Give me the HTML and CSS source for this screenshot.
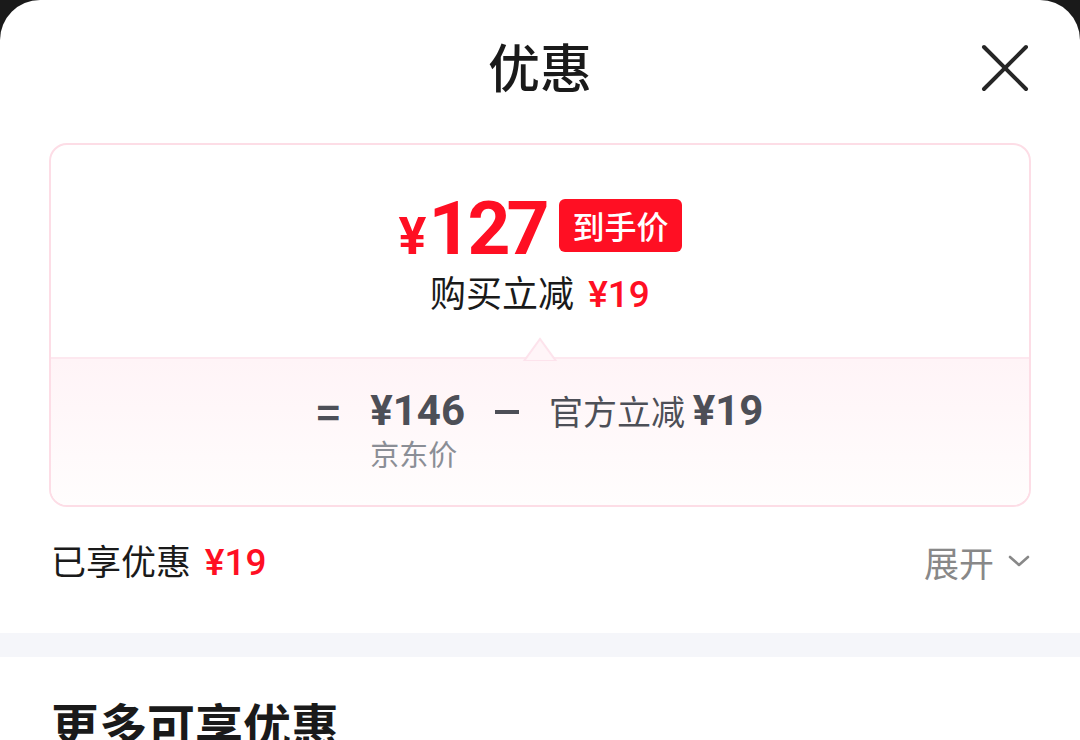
FILE: index.html
```html
<!DOCTYPE html>
<html lang="zh-CN">
<head>
  <meta charset="UTF-8">
  <meta name="viewport" content="width=device-width, initial-scale=1.0">
  <title>优惠</title>
  <link rel="stylesheet" href="styles.css">
</head>
<body>
  <div class="sheet">
    <header class="sheet-header">
      <h1>优惠</h1>
      <button class="close-button" aria-label="关闭">
        <svg width="48" height="48" viewBox="0 0 48 48" fill="none" stroke="currentColor" stroke-width="4" stroke-linecap="round">
          <path d="M3 3L45 45"></path>
          <path d="M45 3L3 45"></path>
        </svg>
      </button>
    </header>

    <section class="price-card">
      <div class="price-top">
        <div class="price-main">
          <span class="price-final"><span class="yen">¥</span>127</span>
          <span class="badge">到手价</span>
        </div>
        <div class="price-sub">购买立减 <span class="red num">¥19</span></div>
      </div>
      <div class="price-bottom">
        <svg class="notch" width="36" height="24" viewBox="0 0 36 24">
          <polygon points="2,24 18,2 34,24" fill="#fff5f8" stroke="#fde3ec" stroke-width="2"></polygon>
        </svg>
        <div class="formula">
          <span class="op">=</span>
          <div class="term">
            <span class="num strong">¥146</span>
            <span class="term-label">京东价</span>
          </div>
          <span class="op minus"></span>
          <div class="term">
            <span>官方立减 <span class="num strong">¥19</span></span>
          </div>
        </div>
      </div>
    </section>

    <div class="saved-row">
      <div class="saved">已享优惠 <span class="red num">¥19</span></div>
      <a href="#" class="expand">展开
        <svg width="22" height="14" viewBox="0 0 22 14" fill="none" stroke="currentColor" stroke-width="2.6" stroke-linecap="round" stroke-linejoin="round">
          <path d="M2 3L11 11L20 3"></path>
        </svg>
      </a>
    </div>

    <div class="band"></div>

    <h2 class="more-title">更多可享优惠</h2>
  </div>
</body>
</html>
```

FILE: styles.css
```css
* {
  margin: 0;
  padding: 0;
  box-sizing: border-box;
}

body {
  background-color: #1a1a1a;
  font-family: "Noto Sans CJK SC", "Noto Sans", sans-serif;
  color: #1a1a1a;
  overflow: hidden;
}

.sheet {
  background-color: #fff;
  border-radius: 40px 40px 0 0;
  height: 740px;
  overflow: hidden;
}

.sheet-header {
  height: 143px;
  display: flex;
  justify-content: center;
  align-items: center;
  position: relative;
}

.sheet-header h1 {
  font-size: 52px;
  font-weight: 500;
  margin-top: -12px;
}

.close-button {
  position: absolute;
  right: 51px;
  top: 44px;
  background: none;
  border: none;
  color: #262626;
  display: flex;
}

/* Carte du prix */
.price-card {
  margin: 0 49px;
  border: 2px solid #fddde6;
  border-radius: 18px;
  overflow: hidden;
}

.price-top {
  height: 212px;
  display: flex;
  flex-direction: column;
  align-items: center;
  padding-top: 45px;
}

.price-main {
  display: flex;
  align-items: center;
  gap: 14px;
  height: 76px;
}

.num {
  font-family: "Roboto", sans-serif;
}

.price-final {
  font-family: "Roboto", sans-serif;
  font-weight: 700;
  font-size: 75px;
  letter-spacing: -4px;
  color: #ff0f23;
  line-height: 1;
}

.price-final .yen {
  font-size: 52px;
  margin-right: 6px;
}

.badge {
  background-color: #ff0f23;
  color: #fff;
  font-size: 32px;
  font-weight: 500;
  line-height: 53px;
  padding: 0 13px;
  border-radius: 6px;
  margin-top: -6px;
}

.price-sub {
  font-size: 36px;
  line-height: 50px;
}

.red {
  color: #ff0f23;
}

.price-sub .num,
.saved .num {
  font-size: 37px;
  font-weight: 500;
  margin-left: 6px;
}

.price-bottom {
  position: relative;
  height: 148px;
  border-top: 2px solid #fde8ef;
  background: linear-gradient(#fff4f7, #fffdfd);
  display: flex;
  justify-content: center;
  padding-top: 27px;
}

.notch {
  position: absolute;
  left: 471px;
  top: -22px;
}

.formula {
  display: flex;
  align-items: flex-start;
  gap: 30px;
  color: #4d4f57;
  font-size: 34px;
  line-height: 50px;
}

.op {
  font-size: 40px;
  font-weight: 700;
}

.minus {
  width: 24px;
  height: 4px;
  background-color: #4d4f57;
  margin-top: 24px;
}

.term {
  display: flex;
  flex-direction: column;
}

.strong {
  font-weight: 700;
  font-size: 42px;
}

.term-label {
  font-size: 29px;
  color: #8b8e96;
  line-height: 34px;
}

/* Ligne des économies */
.saved-row {
  display: flex;
  justify-content: space-between;
  align-items: center;
  padding: 28px 50px 46px 51px;
  height: 126px;
}

.saved {
  font-size: 35px;
  line-height: 52px;
}

.expand {
  display: flex;
  align-items: center;
  gap: 14px;
  font-size: 35px;
  color: #888;
  text-decoration: none;
}

.band {
  height: 24px;
  background-color: #f5f6fa;
}

.more-title {
  font-size: 48px;
  font-weight: 700;
  padding: 31px 51px 0;
}
```
